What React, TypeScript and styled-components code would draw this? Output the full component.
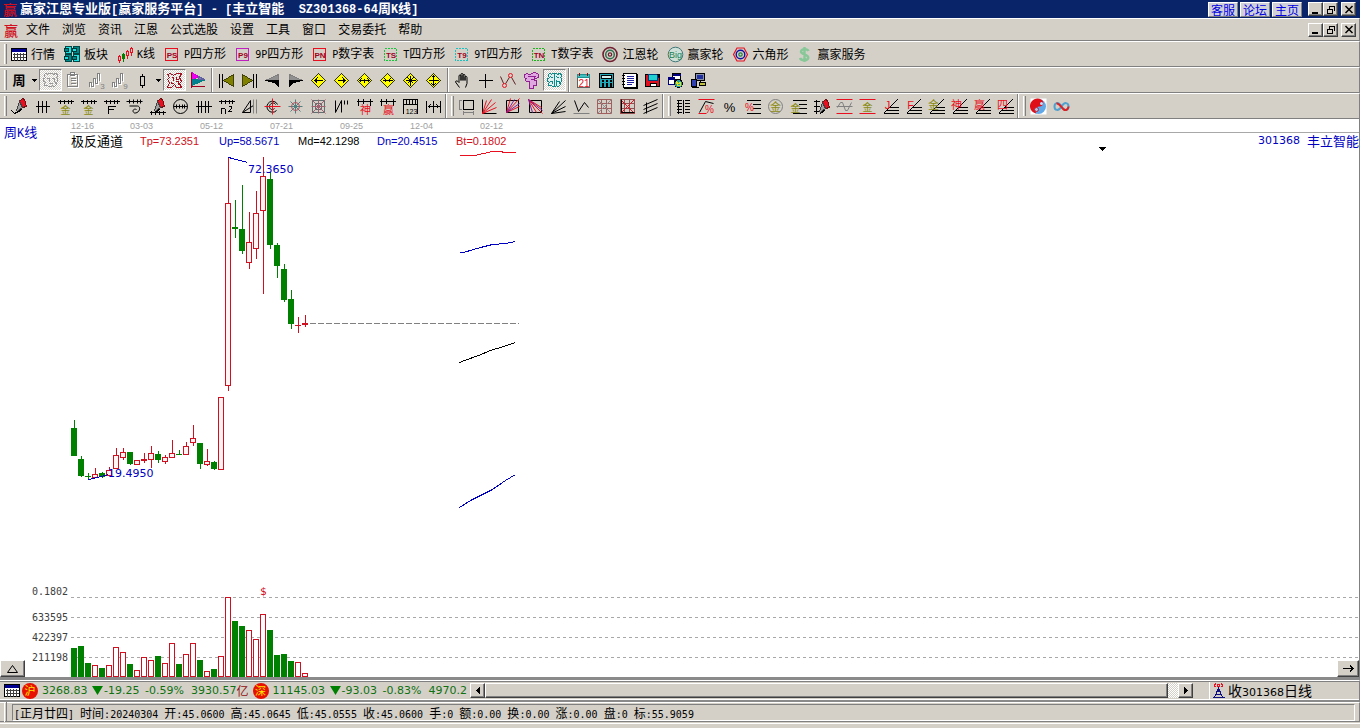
import React, { Fragment, ReactNode } from 'react';
import styled, { createGlobalStyle, css } from 'styled-components';

const face = '#d4d0c8';
const shade = '#808080';
const navy = '#0a246a';
const blue = '#0000c0';
const red = '#d01020';
const green = '#008000';
const cjk = '"Liberation Sans", "Noto Sans CJK SC", sans-serif';

const GlobalStyle = createGlobalStyle`
  * { box-sizing: border-box; }
  body { margin: 0; background: ${face}; font: 12px/16px ${cjk}; color: #000; }
  button { font: inherit; color: inherit; padding: 0; margin: 0; }
`;

/* ---------- text with half-width latin runs ---------- */

const RunText = styled.span<{ $large?: boolean }>`
  white-space: pre;
  font-family: "Noto Sans CJK SC", sans-serif;
  font-size: ${p => (p.$large ? 13 : 12)}px;
`;
const Latin = styled.span<{ $large?: boolean }>`
  font-family: ${p => (p.$large ? '"Liberation Mono"' : '"DejaVu Sans Mono"')}, monospace;
  font-size: ${p => (p.$large ? 12 : 10)}px;
`;
function Runs({ text, large }: { text: string; large?: boolean }) {
  return (
    <RunText $large={large}>
      {text.split(/([\x20-\x7e]+)/).map((part, i) =>
        i % 2 ? <Latin key={i} $large={large}>{part}</Latin> : <Fragment key={i}>{part}</Fragment>
      )}
    </RunText>
  );
}

/* ---------- icon drawing helpers ---------- */

function S({ d, c = '#000', f = 'none', w = 1 }: { d: string; c?: string; f?: string; w?: number }) {
  return <path d={d} stroke={c} fill={f} strokeWidth={w} />;
}
function T({ x, y, s = 10, c = '#000', b, children }: { x: number; y: number; s?: number; c?: string; b?: boolean; children: ReactNode }) {
  return (
    <text x={x} y={y} fontSize={s} fill={c} textAnchor="middle" fontWeight={b ? 700 : 400} fontFamily={cjk}>
      {children}
    </text>
  );
}
function Icon({ children, smooth }: { children: ReactNode; smooth?: boolean }) {
  return (
    <svg width="17" height="17" viewBox="-0.5 -0.5 17 17" shapeRendering={smooth ? 'auto' : 'crispEdges'} aria-hidden="true">
      {children}
    </svg>
  );
}

const olive = '#8a8a10';
const hot = '#e81020';
const comb = 'M0 3H16M3 1V5M7 1V5M11 1V5M14 1V5';
const fan = 'M1 15L15 1M7 9H16M4 12H16M1 15H16';

const TableIcon = () => (
  <Icon>
    <S d="M0 2H15V14H0Z" f="#fff" />
    <S d="M1 3H14V5H1Z" c="#000090" f="#000090" />
    <S d="M1 8H14M1 11H14M3 6V14M6 6V14M9 6V14M12 6V14" c="#404040" />
  </Icon>
);
const BoardIcon = () => (
  <Icon>
    {[[0, 0], [8, 0], [0, 8], [8, 8]].map(([x, y], i) => (
      <g key={i} transform={`translate(${x} ${y})`}>
        <S d="M1 0H7V7H1Z" c="#004848" f={i % 3 ? '#008888' : '#20e0e0'} />
        <S d="M0 2H4V5H0Z" c="#003838" f={i % 3 ? '#20e0e0' : '#008888'} />
      </g>
    ))}
  </Icon>
);
const KlineIcon = () => (
  <Icon>
    <S d="M2 8V16M10 3V12M14 0V9" c={hot} />
    <S d="M6 6V15" c={green} />
    <S d="M1 10H3V14H1ZM9 5H11V9H9ZM13 2H15V6H13Z" c={hot} f={face} />
    <S d="M5 8H7V12H5Z" c={green} f={green} />
  </Icon>
);
const BoxIcon = ({ label, c, dotted }: { label: string; c: string; dotted?: boolean }) => (
  <Icon>
    <rect x="1" y="2" width="12" height="12" fill="none" stroke={c} strokeDasharray={dotted ? '2 1' : undefined} />
    <T x={7.5} y={11} s={8} c="#a00020" b>{label}</T>
  </Icon>
);
const WheelIcon = () => (
  <Icon smooth>
    <circle cx="7.5" cy="8" r="7" fill="none" stroke="#702030" strokeWidth="1.6" />
    <circle cx="7.5" cy="8" r="4.3" fill="none" stroke="#307050" strokeWidth="1.5" />
    <circle cx="7.5" cy="8" r="1.7" fill="none" stroke="#702030" strokeWidth="1.2" />
  </Icon>
);
const BigIcon = () => (
  <Icon smooth>
    <circle cx="8" cy="8" r="7.3" fill="#cfe0d8" stroke="#407878" />
    <T x={8} y={11} s={9} c="#208050">Big</T>
  </Icon>
);
const HexIcon = () => (
  <Icon smooth>
    <S d="M1 8L4.500 1.500H11.500L15 8L11.500 14.500H4.500Z" c={hot} w={1.2} />
    <circle cx="8" cy="8" r="4.300" fill="none" stroke="#1010a0" strokeWidth="1.4" />
    <circle cx="8" cy="8" r="1.700" fill="none" stroke="#208040" strokeWidth="1.2" />
  </Icon>
);
const DollarIcon = () => (
  <Icon smooth>
    <S d="M11 4.500C10 2 4 2 3.500 5C3.300 8.500 11 7.500 10.800 11.300C10.300 14.500 3.500 14.500 2.500 11.500M7 0.500V15.500" c="#88c898" w={2.4} />
  </Icon>
);

const cloud = 'M3 5C0 3 3 0 5 2C7 0 9 0 11 2C14 0 17 3 14 5C16 7 16 10 13 10C15 13 12 15 10 13C8 15 6 15 5 13C2 14 1 12 3 10C0 9 0 6 3 5Z';
const wave = 'M1 14V10H3V14H5V6H7V11H9V1H11V8';
const diamond = 'M8 1L15 8L8 15L1 8Z';
const Diamond = ({ d }: { d: string }) => (
  <Icon>
    <S d={diamond} c="#303000" f="#ffff00" />
    <S d={d} />
  </Icon>
);
const GreyWave = ({ n }: { n: string }) => (
  <Icon>
    <g transform="translate(1 1)"><S d={wave} c="#fff" /></g>
    <S d={wave} c={shade} />
    <T x={14} y={16} s={8} c={shade}>{n}</T>
  </Icon>
);

type Tool = [string, ReactNode, boolean?];

const period: Tool[] = [
  ['形态', <Icon><S d={cloud} c="#989898" /><S d="M4 6H7V9M9 6H12V9M6 11H10" c="#989898" /></Icon>, true],
  ['列表', <Icon><S d="M3 3H13V15H3ZM6 1H10V4H6ZM6 7H11M6 9H11M6 12H11" c="#fff" /><S d="M2 2H12V14H2ZM5 0H9V3H5ZM5 6H10M5 8H10M5 11H10" c={shade} /></Icon>],
  ['三波', <GreyWave n="3" />],
  ['九波', <GreyWave n="9" />],
];
const shapes: Tool[] = [
  ['极反', <Icon><S d="M1 2L4 1L7 3L10 1H15L13 5L15 9L13 11L15 15H10L8 12L5 15H1L3 10L1 7L3 5Z" c="#a01020" /><S d="M5 5H7V8M10 4V7H12M5 9V11H7M9 9H12V12" c="#a01020" /></Icon>, true],
  ['旗帜', <Icon><S d="M2 0L9 4L2 8Z" c="#d000d0" f="#f000f0" /><S d="M2 7H10L14 8L2 13Z" c="#008080" f="#008090" /><S d="M2 0V15M2 14H15" c="#a00020" /><S d="M9 4L15 7H9Z" c="#6060a0" f="#8080b0" /></Icon>],
];
const moves: Tool[] = [
  ['最前', <Icon><S d="M1 1V15M4 1V15" /><S d="M15 2V14L5 8Z" c="#404000" f="#808000" /></Icon>],
  ['最后', <Icon><S d="M12 1V15M15 1V15" /><S d="M1 2V14L11 8Z" c="#404000" f="#808000" /></Icon>],
  ['后退', <Icon><S d="M14 2V8H1Z" c={shade} f="#909090" /><S d="M1 8H14V14L10 10Z" f="#000" /></Icon>],
  ['前进', <Icon><S d="M2 2V8H15Z" c={shade} f="#909090" /><S d="M15 8H2V14L6 10Z" f="#000" /></Icon>],
  ['左移', <Diamond d="M4 8H12M7 5L4 8L7 11M6 6V10" />],
  ['右移', <Diamond d="M4 8H12M9 5L12 8L9 11M10 6V10" />],
  ['展宽', <Diamond d="M3 8H13M5 6L3 8L5 10M11 6L13 8L11 10M8 6V10" />],
  ['压缩', <Diamond d="M3 8H13M5 6L7 8L5 10M11 6L9 8L11 10" />],
  ['聚合', <Diamond d="M3 8H13M8 3V13M5 5L11 11M11 5L5 11" />],
  ['拉高', <Diamond d="M3 8H13M8 3V13M6 5L8 3L10 5M6 11L8 13L10 11" />],
];
const tools: Tool[] = [
  ['平移', <Icon smooth><S d="M5 15L1 9.500C1 8 3 8 4.500 10V3.500C4.500 2 6.500 2 6.500 3.500V8V2C6.500 .500 8.500 .500 8.500 2V8V3C8.500 1.500 10.500 1.500 10.500 3V8V5C10.500 3.500 12.500 3.500 12.500 5V11L11 15" /></Icon>],
  ['十字', <Icon><S d="M8 1V15M1 8H15" /></Icon>],
  ['折线', <Icon smooth><S d="M0 4L4 13L10 3L15 12" c="#602020" /><circle cx="4" cy="13" r="2" fill={face} stroke={hot} /><circle cx="10" cy="3" r="2" fill={face} stroke={hot} /></Icon>],
  ['拼图', <Icon><S d="M1 2C4 0 6 3 8 1C11 0 15 0 15 3C15 6 12 7 11 5V8H13V13H10V16H6V9C3 10 1 8 3 6C1 6 0 4 1 2Z" c="#902090" f="#e0a8e0" /><S d="M4 4H12M7 7H10" c="#902090" /></Icon>],
  ['大脑', <Icon><S d={cloud} c="#108888" f="#e0f0f0" /><S d="M8 1V14M4 4L7 6M3 9H6V11M10 4L13 6M10 9H13M10 7V12" c="#108888" /></Icon>, true],
];
const utils: Tool[] = [
  ['日历', <Icon><S d="M2 3H14V15H2Z" c="#606060" f="#fff" /><S d="M2 2H14V5H2Z" c="#209090" f="#40c0c0" /><S d="M4 0V3M12 0V3" c="#a00000" /><T x={8.5} y={14} s={10} c={hot}>21</T></Icon>],
  ['计算器', <Icon><S d="M1 1H15V15H1Z" f="#20a8b8" /><S d="M3 3H13V6H3Z" f="#d0f0f0" /><S d="M3 8H5M7 8H9M11 8H13M3 11H5M7 11H9M11 11H13M3 13H5M7 13H9M11 13H13" w={2} /></Icon>],
  ['记事本', <Icon><S d="M2 1H15V15H2Z" f="#fff" /><S d="M15 1V15H2" w={2} /><S d="M5 4H12M5 6H12M5 8H12M5 10H12M5 12H10" c="#2020a0" /><S d="M0 3H3M0 6H3M0 9H3M0 12H3" /></Icon>],
  ['保存', <Icon><S d="M1 2H15V14H1Z" f="#e01020" /><S d="M4 2H13V8H4Z" c="#004080" f="#20d0d0" /><S d="M13 2L15 5V8" f="#0000a0" /><S d="M6 11H12V14H6Z" f="#fff" /></Icon>],
  ['网络', <Icon><S d="M5 1H13V7H5Z" f="#fff" /><S d="M1 5H7V12H1Z" c="#000080" f="#fff" /><S d="M5 2H13M1 6H7" c="#000080" w={2} /><circle cx="11" cy="11" r="4" fill="#20a0a0" stroke="#000" /><S d="M9 9L11 11L13 10V13H10Z" c="#e0e020" /></Icon>],
  ['远程', <Icon><S d="M5 1H14V8H5Z" f="#8890a8" /><S d="M7 3H12V6H7Z" c="#2030a0" f="#2030a0" /><S d="M1 7H6V14H1Z" f="#3040b0" /><S d="M9 10H15V13H9Z" f="#c0c040" /><S d="M1 15H8M10 8V10" /></Icon>],
];

const Pencil = () => (<><S d="M8 3L11 0L13 1L15 8L11 9Z" c="#701010" f={hot} /><S d="M8 3L11 9L6 13L5 12Z" c="#404040" f="#a0a0a0" /><S d="M11 10L6 14" /></>);
const Grid = ({ c, diag = hot }: { c: string; diag?: string }) => (<><S d="M1 1H15V15H1ZM1 5H15M1 10H15M5 1V15M10 1V15" c={c} /><S d="M1 1L15 15M15 1L1 15" c={diag} /></>);

const drawA: Tool[] = [
  ['画笔', <Icon><Pencil /><S d="M0 12L3 15L7 13" /></Icon>],
  ['等分线', <Icon><S d="M1 8H15M4 2V14M8 2V14M12 2V14" /></Icon>],
  ['黄金分割', <Icon><S d={comb} /><T x={8} y={15} s={10} c={olive}>金</T></Icon>],
  ['黄金周期', <Icon><S d={comb} /><T x={8} y={15} s={10} c={olive}>金</T></Icon>],
  ['斐波那契', <Icon><S d={comb} /><S d="M5 15V8H12M5 11H10" /></Icon>],
  ['螺旋', <Icon smooth><S d={comb} /><S d="M3 7.500H11C15 8 13 15 8 14.500C5 13 7 9.500 10 11" /></Icon>],
  ['标尺笔', <Icon><Pencil /><S d="M0 14H16M2 12V16M6 12V16M10 12V16M14 12V16" /></Icon>],
  ['圆周', <Icon smooth><circle cx="8" cy="8" r="7" fill="none" stroke="#000" /><S d="M1 8H15M4 6V10M7 6V10M10 6V10M12 6V10" /></Icon>],
  ['周期线', <Icon><S d="M0 8H16M3 2V14M6 2V14M10 2V14M13 2V14" /></Icon>],
  ['平方周期', <Icon><S d={comb} /><S d="M3 15V9M3 10H6L7 11V15M10 8H13V10L10 13H13" /></Icon>],
  ['对称', <Icon smooth><S d="M1 14L9 2V14ZM1 14L12 7" /><S d="M12 1V15M15 1V15" c={shade} /></Icon>],
  ['圆环', <Icon smooth><S d="M13 6A5.500 5.500 0 1 0 12 12M11 6C9 3 5 5 5 8C5 11 8 12 10 10" /><S d="M8 0V16M0 8H16" c={hot} /></Icon>],
  ['星形', <Icon smooth><S d="M3 3L13 13M13 3L3 13M8 1V15M1 8H15" c="#508080" /><circle cx="8" cy="8" r="4" fill="none" stroke="#b05060" /></Icon>],
  ['方网', <Icon smooth><S d="M2 2H14V14H2ZM5 5H11V11H5Z" c="#607070" /><S d="M1 1L15 15M15 1L1 15M8 1V15M1 8H15" c="#a06070" /></Icon>],
  ['分波', <Icon smooth><S d="M2 2V14L8 2V14M11 2V6M14 2V6" /></Icon>],
  ['神奇数', <Icon><S d="M0 3H16M2 0V7M7 0V5M14 0V7" /><T x={9} y={15} s={11} c={hot}>神</T></Icon>],
  ['赢家数', <Icon><S d="M0 3H16M2 0V7M7 0V5M14 0V7" /><T x={9} y={15} s={11} c={hot}>赢</T></Icon>],
  ['刻度', <Icon><S d="M1 15V1H15V15M1 6H15M4 1V5M7 1V5M10 1V5M13 1V5" /><T x={9} y={15} s={7}>123</T></Icon>],
  ['区间', <Icon><S d="M1 2V14M15 2V14M8 2V14M2 8H14M5 6L3 8L5 10M11 6L13 8L11 10" /></Icon>],
];
const drawB: Tool[] = [
  ['矩形', <Icon><S d="M5 2H15V11H5Z" /><S d="M1 2V11M0 2H3M0 11H3M5 14H15M5 12V16M15 12V16" c={shade} /></Icon>],
  ['角度线', <Icon smooth><S d="M1 1V15H15" /><S d="M1 15L5 2M1 15L10 1M1 15L14 4M1 15L15 9" c={hot} /></Icon>],
  ['角度网', <Icon smooth><S d="M2 2H14V14H2Z" /><S d="M2 14L6 0M2 14L15 0M2 14L15 8" c={hot} /><S d="M2 14L10 1M2 14L15 5" c="#8020a0" /></Icon>],
  ['下降角', <Icon smooth><S d="M2 2H14V14H2Z" /><S d="M1 1L15 15M1 1L14 9M1 1L9 14" c={hot} /><S d="M1 1L15 12M1 1L5 14" c="#8020a0" /></Icon>],
  ['速度线', <Icon smooth><S d="M1 15L15 2M1 15L15 8M1 15L15 13M1 15L9 3" /></Icon>],
  ['波段', <Icon smooth><S d="M1 2L5 13L11 4L15 9" /><S d="M0 15H16" c={shade} /></Icon>],
  ['红格', <Icon smooth><Grid c="#a06060" diag="#909090" /></Icon>],
  ['黑格', <Icon smooth><Grid c="#905050" /><S d="M2 1V14H15" /></Icon>],
  ['平行线', <Icon smooth><S d="M1 7L15 1M1 11L15 5M1 15L15 9M4 4V15" /></Icon>],
];
const lines = 'M2 2H16M8 6H16M8 10H16M2 15H16';
const Fan = ({ t, c = hot }: { t: string; c?: string }) => (<Icon><S d={fan} /><T x={5} y={10} s={11} c={c}>{t}</T></Icon>);
const drawC: Tool[] = [
  ['价格尺', <Icon><S d="M3 1V15M8 1V15M1 2H6M1 5H6M1 8H6M1 11H6M1 14H6M9 2H14M9 5H14M9 8H14M9 11H14M9 14H14" /></Icon>],
  ['百分比线', <Icon smooth><S d="M0 1H16M0 15H8" c={hot} /><S d="M1 14L7 3L15 5" /><T x={11} y={14} s={10} c={hot}>%</T></Icon>],
  ['百分比', <Icon><T x={8} y={13} s={13}>%</T></Icon>],
  ['百分分割', <Icon><S d={lines} /><T x={5} y={12} s={10} c={hot}>%</T></Icon>],
  ['金圆', <Icon smooth><circle cx="8" cy="8" r="7" fill="none" stroke={shade} /><T x={8} y={12} s={11} c={olive}>金</T></Icon>],
  ['金线', <Icon><S d={lines} /><T x={5} y={13} s={10} c={olive}>金</T></Icon>],
  ['标记', <Icon><S d="M3 1V15M0 3H6M0 8H6M0 13H6" /><g transform="translate(1 1)"><Pencil /></g></Icon>],
  ['波动', <Icon smooth><S d="M0 1H16M0 15H16" c={hot} /><S d="M1 9L4 4H6L9 12H11L15 4M0 8H16" c={shade} /></Icon>],
  ['金通道', <Icon smooth><S d="M0 1H16M0 15H16" c={hot} /><T x={8} y={12} s={10} c={olive}>金</T></Icon>],
  ['J线', <Fan t="J" />],
  ['F线', <Fan t="F" />],
  ['金扇', <Fan t="金" c={olive} />],
  ['神扇', <Fan t="神" />],
  ['赢扇', <Fan t="赢" />],
  ['四扇', <Fan t="四" />],
];
const drawD: Tool[] = [
  ['太极', <Icon smooth><rect x="0" y="0" width="16" height="16" fill="#fff" /><circle cx="8" cy="8" r="7.500" fill="#60a8e8" /><S d="M12 2A7.500 7.500 0 1 0 6 15C3 11 6 8 9 8C12 8 14 5 12 2Z" c="none" f="#e01018" /><circle cx="11" cy="5" r="1.500" fill="#c0e0ff" /><circle cx="6" cy="11" r="2" fill="#b0c8e8" stroke="#c02030" /></Icon>],
  ['循环', <Icon smooth><S d="M8 8C5 3 1 4 1 8C1 12 5 13 8 8C11 3 15 4 15 8C15 12 11 13 8 8" c="#50a0d0" w={2} /><S d="M3 5C6 4 8 10 11 11.500C13 12 15 10 15 8" c="#e02020" w={2} /></Icon>],
];

/* ---------- chrome ---------- */

const Shell = styled.div`
  min-height: 100vh;
  display: flex;
  flex-direction: column;
  background: ${face};
`;
const TitleBar = styled.header`
  height: 18px;
  display: flex;
  align-items: center;
  gap: 3px;
  padding: 0 4px 0 3px;
  background: ${navy};
  color: #fff;
`;
const AppTitle = styled.h1`
  flex: 1;
  margin: 0;
  font-size: 13px;
  line-height: 18px;
  font-weight: 700;
  white-space: nowrap;
`;
const Logo = styled.span`
  width: 14px;
  font: 500 14px/16px "Noto Sans CJK SC", sans-serif;
  color: ${red};
`;
const TitleLinks = styled.nav`
  display: flex;
  gap: 2px;
  margin-right: 3px;
`;
const TitleLink = styled.a`
  width: 30px;
  height: 15px;
  border: 1px solid;
  border-color: #fff ${shade} ${shade} #fff;
  background: #d0d0d8;
  color: #0000e0;
  font: 12px/13px "Noto Sans CJK SC", sans-serif;
  text-align: center;
  text-decoration: none;
`;
const raised = css`
  border: 1px solid;
  border-color: #fff #404040 #404040 #fff;
  background: ${face};
  box-shadow: inset -1px -1px ${shade};
`;
const WindowButtons = styled.div`
  display: flex;
  align-items: center;
`;
const WindowButton = styled.button`
  ${raised}
  width: 15px;
  height: 14px;
  display: grid;
  place-items: center;
  &:last-child { margin-left: 3px; }
`;
const bar = css`
  display: flex;
  align-items: center;
  border-top: 1px solid #fff;
  border-bottom: 1px solid ${shade};
  border-right: 1px solid ${shade};
`;
const MenuBar = styled.nav`
  ${bar}
  height: 23px;
  padding: 0 3px 0 4px;
`;
const MenuList = styled.div`
  flex: 1;
  display: flex;
  gap: 12px;
  padding-left: 8px;
`;
const MenuItem = styled.button`
  border: 0;
  background: none;
  line-height: 18px;
`;
const ToolBar = styled.div`
  ${bar}
  height: 26px;
`;
const Grip = styled.span`
  flex: none;
  width: 3px;
  height: 20px;
  margin: 0 1px 0 4px;
  border-left: 1px solid #fff;
  border-right: 1px solid ${shade};
`;
const ToolGroup = styled.div`
  display: flex;
  align-items: center;
`;
const FeatureGroup = styled.div`
  display: flex;
  align-items: center;
  gap: 9px;
  padding-left: 3px;
`;
const LabelButton = styled.button`
  display: flex;
  align-items: center;
  gap: 3px;
  border: 0;
  background: none;
  white-space: nowrap;
`;
const IconButton = styled.button<{ $pressed?: boolean }>`
  flex: none;
  width: 23px;
  height: 22px;
  display: grid;
  place-items: center;
  border: 1px solid transparent;
  background: none;
  ${p => p.$pressed && css`
    border-color: ${shade} #fff #fff ${shade};
    background: repeating-conic-gradient(#fff 0 25%, ${face} 0 50%) 0 0 / 2px 2px;
  `}
`;
const WeekButton = styled(IconButton)`
  width: 22px;
  font: 700 13px/20px "Noto Sans CJK SC", sans-serif;
`;
const DropButton = styled.button`
  width: 9px;
  height: 22px;
  border: 0;
  background: none;
  display: grid;
  place-items: center;
`;
const Divider = styled.span`
  flex: none;
  width: 2px;
  height: 24px;
  margin: 0 2px;
  border-left: 1px solid ${shade};
  border-right: 1px solid #fff;
`;
const BandEdge = styled(Divider)`
  margin: 0;
`;

const Arrow = () => (
  <svg width="5" height="3" shapeRendering="crispEdges" aria-hidden="true"><path d="M0 0H5L2.500 3Z" /></svg>
);

function WinButtons() {
  return (
    <WindowButtons>
      <WindowButton aria-label="最小化"><svg width="10" height="9" shapeRendering="crispEdges"><path d="M1 7H7V9H1Z" /></svg></WindowButton>
      <WindowButton aria-label="还原"><svg width="10" height="9" shapeRendering="crispEdges"><path d="M3 1H8V5H7M1 4H6V8H1ZM3 0V3" transform="translate(.5 .5)" fill="none" stroke="#000" /></svg></WindowButton>
      <WindowButton aria-label="关闭"><svg width="10" height="9"><path d="M1.500 1L8.500 8M8.500 1L1.500 8" stroke="#000" strokeWidth="1.500" /></svg></WindowButton>
    </WindowButtons>
  );
}

function Buttons({ items }: { items: Tool[] }) {
  return (
    <ToolGroup>
      {items.map(([name, icon, pressed]) => (
        <IconButton key={name} aria-label={name} title={name} $pressed={pressed}>{icon}</IconButton>
      ))}
    </ToolGroup>
  );
}

const menus = ['文件', '浏览', '资讯', '江恩', '公式选股', '设置', '工具', '窗口', '交易委托', '帮助'];
const features: [string, ReactNode][] = [
  ['行情', <TableIcon />],
  ['板块', <BoardIcon />],
  ['K线', <KlineIcon />],
  ['P四方形', <BoxIcon label="PS" c={hot} />],
  ['9P四方形', <BoxIcon label="P9" c="#c020c0" />],
  ['P数字表', <BoxIcon label="PN" c={hot} />],
  ['T四方形', <BoxIcon label="TS" c="#20c040" dotted />],
  ['9T四方形', <BoxIcon label="T9" c="#20c0c0" dotted />],
  ['T数字表', <BoxIcon label="TN" c="#20b020" dotted />],
  ['江恩轮', <WheelIcon />],
  ['赢家轮', <BigIcon />],
  ['六角形', <HexIcon />],
  ['赢家服务', <DollarIcon />],
];

/* ---------- chart ---------- */

const Chart = styled.main`
  flex: 1;
  display: flex;
  flex-direction: column;
  position: relative;
  background: #fff;
  border-right: 1px solid ${shade};
  border-bottom: 3px solid #8a8a8a;
`;
const ChartHead = styled.div`
  display: grid;
  grid-template-columns: 70px 1fr;
`;
const PeriodName = styled.div`
  padding: 5px 0 0 4px;
  color: ${blue};
`;
const DateAxis = styled.div`
  height: 14px;
  display: flex;
  border-bottom: 1px solid #a8a8a8;
  font: 9px/15px "Liberation Sans", sans-serif;
  color: #a0a0a0;
`;
const DateTick = styled.span<{ $first?: boolean }>`
  width: ${p => (p.$first ? 60 : 70)}px;
  padding-left: ${p => (p.$first ? 1 : 0)}px;
`;
const Legend = styled.div`
  height: 18px;
  display: flex;
  font: 11px/17px "Liberation Sans", sans-serif;
`;
const LegendItem = styled.span<{ $c: string }>`
  width: 79px;
  color: ${p => p.$c};
`;
const LegendTitle = styled.span`
  width: 70px;
  padding-left: 1px;
  font: 13px/16px "Noto Sans CJK SC", sans-serif;
`;
const Marker = styled.span`
  margin: 0 152px 0 auto;
  align-self: flex-end;
  line-height: 0;
`;
const StockName = styled.span`
  display: flex;
  gap: 7px;
  color: ${blue};
  font: 13px/16px "Noto Sans CJK SC", sans-serif;
`;
const Code = styled.span`
  font: 11px/16px "DejaVu Sans", sans-serif;
`;
const PricePlot = styled.svg`
  flex: 1;
  display: block;
  width: 100%;
  min-height: 434px;
`;
const VolumePlot = styled.svg`
  display: block;
  width: 100%;
  height: 92px;
`;
const CornerButton = styled.button<{ $side: 'left' | 'right' }>`
  ${raised}
  position: absolute;
  bottom: 0;
  ${p => p.$side}: 0;
  width: ${p => (p.$side === 'left' ? 25 : 22)}px;
  height: 17px;
  display: grid;
  place-items: center;
`;

/* up flag, wick top, wick bottom, body top, body bottom, volume bar top */
const candles: [number, number, number, number, number, number][] = [
  [0, 420, 456, 428, 456, 648], [0, 456, 477, 459, 476, 646], [0, 473, 480, 476, 477, 663], [1, 468, 477, 474, 477, 665],
  [0, 472, 478, 473, 477, 668], [1, 467, 476, 470, 475, 665], [1, 448, 468, 455, 468, 647], [1, 448, 460, 452, 457, 652],
  [0, 452, 465, 452, 464, 664], [1, 460, 465, 460, 464, 670], [1, 453, 463, 459, 461, 657], [1, 446, 468, 453, 459, 660],
  [0, 451, 463, 454, 460, 656], [1, 455, 464, 457, 461, 663], [1, 440, 458, 453, 457, 643], [0, 450, 455, 454, 455, 664],
  [1, 442, 455, 446, 454, 654], [1, 425, 446, 438, 442, 643], [0, 443, 469, 443, 464, 660], [1, 449, 466, 461, 464, 671],
  [0, 461, 470, 462, 469, 669], [1, 397, 470, 397, 469, 656], [1, 157, 391, 203, 385, 597], [0, 200, 238, 227, 229, 621],
  [0, 185, 254, 229, 251, 626], [1, 212, 269, 242, 262, 630], [1, 191, 259, 213, 248, 639], [1, 157, 294, 176, 210, 614],
  [0, 172, 249, 179, 245, 630], [0, 243, 278, 245, 266, 655], [0, 264, 302, 269, 300, 654], [0, 290, 329, 299, 324, 661],
  [1, 317, 333, 325, 326, 662], [1, 315, 327, 323, 325, 673],
];
const firstX = 71;
const step = 7;
const channels: [string, string][] = [
  ['459,155 474,155 492,151 501,151 503,152 515,152', hot],
  ['459,252 463,252 480,247 492,244 505,243 515,241', '#0000c0'],
  ['459,362 464,360 478,355 490,350 503,346 515,342', '#000'],
  ['459,507 470,500 480,495 492,489 505,480 515,474', '#0000c0'],
];

/* A rising candle is hollow, a falling or flat one is solid. */
function Candle({ up, x, hi, lo, top, bottom }: { up: boolean; x: number; hi: number; lo: number; top: number; bottom: number }) {
  const color = up ? red : green;
  const hollow = up && bottom - top > 2;
  return (
    <g fill={color}>
      <rect x={x + 3} y={hi} width={1} height={lo - hi} />
      {hollow
        ? <rect x={x + 0.5} y={top + 0.5} width={5} height={bottom - top} fill="#fff4f4" stroke={color} />
        : <rect x={x} y={top} width={6} height={bottom - top} />}
    </g>
  );
}

function Price() {
  return (
    <PricePlot shapeRendering="crispEdges" role="img" aria-label="周K线图">
      <g transform="translate(0 -151)">
        {candles.map(([up, hi, lo, top, bottom], i) => (
          <Candle key={i} up={!!up} x={firstX + i * step} hi={hi} lo={lo} top={top} bottom={bottom} />
        ))}
        <g transform="translate(.5 .5)" fill="none">
          <path d="M309 323H518" stroke={shade} strokeDasharray="6 2" />
          {channels.map(([points, color]) => <polyline key={points} points={points} stroke={color} />)}
          <path d="M228 157L232 158L247 162M88 479L97 477L108 474" stroke={blue} />
        </g>
        <g fill={blue} fontFamily='"DejaVu Sans", sans-serif' fontSize="11">
          <text x="248" y="173">72.3650</text>
          <text x="108" y="477">19.4950</text>
        </g>
      </g>
    </PricePlot>
  );
}

const levels: [string, number, number][] = [['0.1802', 597, 595], ['633595', 617, 621], ['422397', 637, 641], ['211198', 657, 661]];

function Volume() {
  return (
    <VolumePlot shapeRendering="crispEdges" role="img" aria-label="成交量">
      <g transform="translate(0 -585)">
        {levels.map(([label, y, base]) => (
          <g key={label}>
            <text x="32" y={base} fontSize="10" fill="#404040" fontFamily='"DejaVu Sans Mono", monospace'>{label}</text>
            <line x1="71" x2="100%" y1={y + 0.5} y2={y + 0.5} stroke="#a8a8a8" strokeDasharray="3 3" />
          </g>
        ))}
        <g transform="translate(.5 .5)">
          {candles.map(([up, , , , , top], i) => (
            <rect key={i} x={firstX + i * step} y={top} width={5} height={676 - top} stroke={up ? red : green} fill={up ? '#fff' : green} />
          ))}
        </g>
        <text x="260" y="595" fontSize="11" fill={red} fontFamily='"DejaVu Sans Mono", monospace'>$</text>
      </g>
    </VolumePlot>
  );
}

/* ---------- status bars ---------- */

const QuoteBar = styled.section`
  display: flex;
  height: 22px;
  border-top: 1px solid #fff;
  border-bottom: 2px solid #8a8a8a;
  border-right: 1px solid ${shade};
  box-shadow: inset 0 1px ${shade}, inset 0 -1px #fff;
`;
const Quotes = styled.div`
  width: 470px;
  flex: none;
  display: flex;
  align-items: center;
  overflow: hidden;
  padding-left: 4px;
  font: 11px/18px "DejaVu Sans", sans-serif;
  color: #107010;
  white-space: nowrap;
  svg { flex: none; }
`;
const Badge = styled.span`
  flex: none;
  width: 16px;
  height: 16px;
  margin: 0 4px 0 1px;
  border-radius: 8px;
  background: #e81000;
  color: #ffe800;
  font: 11px/15px "Noto Sans CJK SC", sans-serif;
  text-align: center;
`;
const Figure = styled.span<{ $w?: number }>`
  flex: none;
  width: ${p => (p.$w ? p.$w + 'px' : 'auto')};
`;
const Unit = styled.span`
  width: 15px;
  color: #901010;
  font: 12px/18px "Noto Sans CJK SC", sans-serif;
`;
const ScrollBar = styled.div`
  flex: 1;
  display: flex;
  height: 15px;
  margin-top: 2px;
  background: repeating-conic-gradient(#fff 0 25%, ${face} 0 50%) 0 0 / 2px 2px;
`;
const ScrollButton = styled.button`
  ${raised}
  width: 15px;
  flex: none;
  display: grid;
  place-items: center;
`;
const Thumb = styled.div`
  ${raised}
  flex: 1;
  margin-right: 10px;
`;
const Receiver = styled.div`
  width: 150px;
  flex: none;
  display: flex;
  align-items: center;
  gap: 1px;
  margin: 1px 0 1px 16px;
  border-left: 1px solid #fff;
  font: 14px/18px "Noto Sans CJK SC", sans-serif;
`;
const InfoBar = styled.footer`
  display: flex;
  align-items: center;
  height: 20px;
  border-top: 1px solid #fff;
  border-bottom: 1px solid ${shade};
  border-right: 1px solid ${shade};
  padding-right: 4px;
  margin-bottom: 1px;
`;
const InfoField = styled.div`
  flex: 1;
  height: 17px;
  margin-left: 4px;
  padding-left: 1px;
  border: 1px solid;
  border-color: ${shade} #fff #fff ${shade};
  line-height: 15px;
  white-space: nowrap;
  overflow: hidden;
`;
const Edge = styled.div`
  height: 5px;
  border-top: 1px solid #fff;
`;

const Down = () => <svg width="12" height="10" aria-hidden="true"><path d="M0 0H11L5.500 9Z" fill="#008000" /></svg>;

export default function App() {
  return (
    <Shell>
      <GlobalStyle />
      <TitleBar>
        <Logo>赢</Logo>
        <AppTitle><Runs large text="赢家江恩专业版[赢家服务平台] - [丰立智能  SZ301368-64周K线]" /></AppTitle>
        <TitleLinks>
          {['客服', '论坛', '主页'].map(t => <TitleLink key={t} href="#">{t}</TitleLink>)}
        </TitleLinks>
        <WinButtons />
      </TitleBar>
      <MenuBar>
        <Logo>赢</Logo>
        <MenuList>
          {menus.map(m => <MenuItem key={m}><Runs text={m} /></MenuItem>)}
        </MenuList>
        <WinButtons />
      </MenuBar>
      <ToolBar>
        <Grip />
        <FeatureGroup>
          {features.map(([name, icon]) => <LabelButton key={name}>{icon}<Runs text={name} /></LabelButton>)}
        </FeatureGroup>
      </ToolBar>
      <ToolBar>
        <Grip />
        <WeekButton>周</WeekButton>
        <DropButton aria-label="选择周期"><Arrow /></DropButton>
        <Buttons items={period} />
        <IconButton aria-label="K线样式"><Icon><S d="M8 1V4M8 13V15M6 4H10V13H6Z" /></Icon></IconButton>
        <DropButton aria-label="选择样式"><Arrow /></DropButton>
        <Buttons items={shapes} />
        <Divider />
        <Buttons items={moves} />
        <Divider />
        <Buttons items={tools} />
        <Divider />
        <Buttons items={utils} />
      </ToolBar>
      <ToolBar>
        <Grip />
        <Buttons items={drawA} />
        <BandEdge /><Grip />
        <Buttons items={drawB} />
        <BandEdge /><Grip />
        <Buttons items={drawC} />
        <BandEdge /><Grip />
        <Buttons items={drawD} />
      </ToolBar>
      <Chart>
        <ChartHead>
          <PeriodName><Runs large text="周K线" /></PeriodName>
          <div>
            <DateAxis>
              {['12-16', '03-03', '05-12', '07-21', '09-25', '12-04', '02-12'].map((d, i) => <DateTick key={d} $first={i === 0}>{d}</DateTick>)}
            </DateAxis>
            <Legend>
              <LegendTitle>极反通道</LegendTitle>
              <LegendItem $c={red}>Tp=73.2351</LegendItem>
              <LegendItem $c={blue}>Up=58.5671</LegendItem>
              <LegendItem $c="#000">Md=42.1298</LegendItem>
              <LegendItem $c={blue}>Dn=20.4515</LegendItem>
              <LegendItem $c={red}>Bt=0.1802</LegendItem>
              <Marker><svg width="7" height="4" shapeRendering="crispEdges"><path d="M0 0H7L3.500 4Z" /></svg></Marker>
              <StockName><Code>301368</Code>丰立智能</StockName>
            </Legend>
          </div>
        </ChartHead>
        <Price />
        <Volume />
        <CornerButton $side="left" aria-label="展开"><svg width="11" height="8"><path d="M.5 7.500H10.500L5.500 .5Z" fill="none" stroke="#000" /></svg></CornerButton>
        <CornerButton $side="right" aria-label="向右"><svg width="11" height="7" shapeRendering="crispEdges"><path d="M0 3.500H10M7 .5L10 3.500L7 6.500" fill="none" stroke="#000" /></svg></CornerButton>
      </Chart>
      <QuoteBar>
        <Quotes>
          <TableIcon />
          <Badge>沪</Badge>
          <Figure $w={50}>3268.83</Figure><Down /><Figure $w={41}>-19.25</Figure><Figure $w={46}>-0.59%</Figure><Figure>3930.57</Figure>
          <Unit>亿</Unit>
          <Badge>深</Badge>
          <Figure $w={57}>11145.03</Figure><Down /><Figure $w={41}>-93.03</Figure><Figure $w={46}>-0.83%</Figure><Figure>4970.2</Figure>
        </Quotes>
        <ScrollBar>
          <ScrollButton aria-label="向左滚动"><svg width="4" height="7" shapeRendering="crispEdges"><path d="M4 0V7L0 3.500Z" /></svg></ScrollButton>
          <Thumb />
          <ScrollButton aria-label="向右滚动"><svg width="4" height="7" shapeRendering="crispEdges"><path d="M0 0V7L4 3.500Z" /></svg></ScrollButton>
        </ScrollBar>
        <Receiver>
          <Icon>
            <S d="M8 5L4 15M8 5L12 15M6 9H10M5 12H11M2 15H14M8 4V9" c="#101080" />
            <S d="M5 1L4 3L5 5M11 1L12 3L11 5M7 2H9V4H7Z" c={hot} />
          </Icon>
          <span>收<Code>301368</Code>日线</span>
        </Receiver>
      </QuoteBar>
      <InfoBar>
        <Grip />
        <InfoField>
          <Runs text="[正月廿四] 时间:20240304 开:45.0600 高:45.0645 低:45.0555 收:45.0600 手:0 额:0.00 换:0.00 涨:0.00 盘:0 标:55.9059" />
        </InfoField>
      </InfoBar>
      <Edge />
    </Shell>
  );
}
